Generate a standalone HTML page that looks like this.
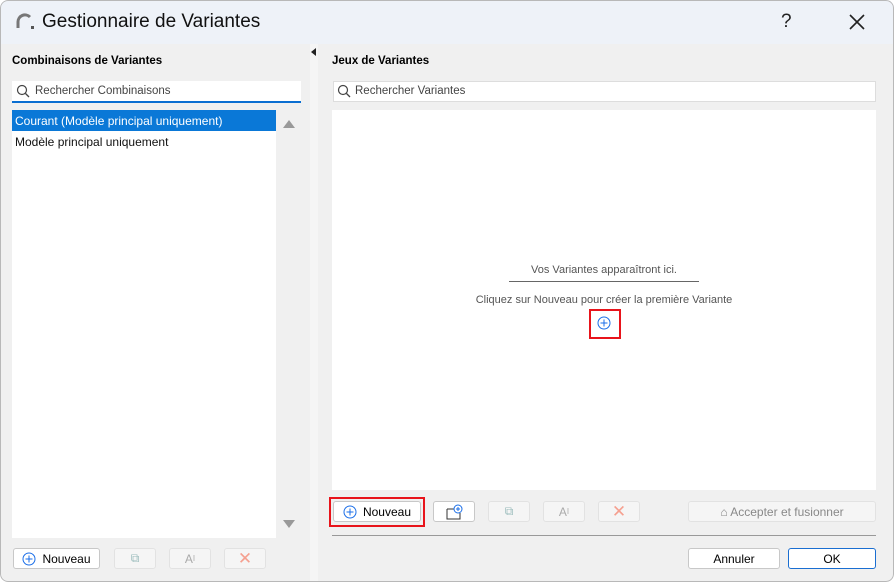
<!DOCTYPE html><html><head><style>
body{margin:0;width:894px;height:582px;background:#fff;font-family:"Liberation Sans",sans-serif;overflow:hidden}
.win{position:absolute;left:0;top:0;width:894px;height:582px;border-radius:8px;background:#f0f0f0;overflow:hidden}
.brd{position:absolute;left:0;top:0;width:892px;height:580px;border:1px solid #b8b8b8;border-radius:8px}
.title{position:absolute;left:0;top:0;width:894px;height:44px;background:#eef2f8}
.a{position:absolute}
.btn{position:absolute;height:20px;border:1px solid #c8c8c8;border-radius:3px;background:#fff;font-size:12px;display:flex;align-items:center;justify-content:center;box-sizing:border-box}
.dis{background:#f5f5f5;border-color:#e2e2e2;color:#aaa}
.t12{font-size:12px}
</style></head><body><div class="win">
<div class="title">
<svg class="a" style="left:15px;top:12px" width="20" height="18"><path d="M3 16 V10 A7 7 0 0 1 15 5" stroke="#777" stroke-width="3" fill="none"/><rect x="16" y="14" width="3" height="3" fill="#555"/></svg>
<div class="a" style="left:42px;top:11px;font-size:19px;color:#111">Gestionnaire de Variantes</div>
<div class="a" style="left:781px;top:11px;font-size:19px;color:#222">?</div>
<svg class="a" style="left:848px;top:13px" width="18" height="18"><path d="M2 2L16 16M16 2L2 16" stroke="#222" stroke-width="1.6"/></svg>
</div>
<div class="a" style="left:310px;top:44px;width:8px;height:540px;background:#f5f5f5"></div>
<div class="a" style="left:311px;top:48px;width:0;height:0;border-top:4px solid transparent;border-bottom:4px solid transparent;border-right:5px solid #222"></div>
<div class="a t12" style="left:12px;top:55px;font-weight:bold;font-size:11.5px">Combinaisons de Variantes</div>
<div class="a" style="left:12px;top:81px;width:289px;height:20px;background:#fff;border-bottom:2px solid #0a6ed1"></div>
<svg class="a" style="left:16px;top:84px" width="15" height="15"><circle cx="6" cy="6" r="4.5" stroke="#444" fill="none" stroke-width="1.2"/><path d="M9.5 9.5L13 13" stroke="#444" stroke-width="1.3"/></svg>
<div class="a t12" style="left:35px;top:85px;color:#444;font-size:11.5px">Rechercher Combinaisons</div>
<div class="a" style="left:12px;top:110px;width:264px;height:428px;background:#fff"></div>
<div class="a" style="left:12px;top:110px;width:264px;height:21px;background:#0a78d7"></div>
<div class="a t12" style="left:15px;top:114px;color:#fff">Courant (Modèle principal uniquement)</div>
<div class="a t12" style="left:15px;top:135px;color:#111">Modèle principal uniquement</div>
<div class="a" style="left:283px;top:120px;border-left:6px solid transparent;border-right:6px solid transparent;border-bottom:8px solid #999"></div>
<div class="a" style="left:283px;top:520px;border-left:6px solid transparent;border-right:6px solid transparent;border-top:8px solid #999"></div>
<div class="btn" style="left:13px;top:548px;width:87px;height:21px"><svg width="14" height="14" style="margin-right:6px"><circle cx="7" cy="7" r="6" stroke="#1a6ee8" fill="none"/><path d="M7 3.5V10.5M3.5 7H10.5" stroke="#1a6ee8"/></svg>Nouveau</div>
<div class="btn dis" style="left:114px;top:548px;width:42px;height:21px;color:#9bb">⧉</div>
<div class="btn dis" style="left:169px;top:548px;width:42px;height:21px">A<sup style="font-size:8px">I</sup></div>
<div class="btn dis" style="left:224px;top:548px;width:42px;height:21px;color:#f5a090;font-size:17px">✕</div>
<div class="a t12" style="left:332px;top:55px;font-weight:bold;font-size:11.5px">Jeux de Variantes</div>
<div class="a" style="left:333px;top:81px;width:543px;height:21px;background:#fff;border:1px solid #ddd;box-sizing:border-box"></div>
<svg class="a" style="left:337px;top:84px" width="15" height="15"><circle cx="6" cy="6" r="4.5" stroke="#444" fill="none" stroke-width="1.2"/><path d="M9.5 9.5L13 13" stroke="#444" stroke-width="1.3"/></svg>
<div class="a t12" style="left:355px;top:85px;color:#444;font-size:11.5px">Rechercher Variantes</div>
<div class="a" style="left:332px;top:110px;width:544px;height:380px;background:#fff"></div>
<div class="a" style="left:509px;top:264px;width:190px;text-align:center;font-size:11px;color:#555;border-bottom:1px solid #666;padding-bottom:5px">Vos Variantes apparaîtront ici.</div>
<div class="a" style="left:332px;top:294px;width:544px;text-align:center;font-size:11px;color:#555">Cliquez sur Nouveau pour créer la première Variante</div>
<div class="a" style="left:589px;top:309px;width:28px;height:26px;border:2px solid #e8141b"></div>
<svg class="a" style="left:597px;top:316px" width="14" height="14"><circle cx="7" cy="7" r="6" stroke="#1a6ee8" fill="none"/><path d="M7 3.5V10.5M3.5 7H10.5" stroke="#1a6ee8"/></svg>
<div class="a" style="left:329px;top:497px;width:92px;height:26px;border:2px solid #e8141b"></div>
<div class="btn" style="left:333px;top:501px;width:88px;height:21px"><svg width="14" height="14" style="margin-right:6px"><circle cx="7" cy="7" r="6" stroke="#1a6ee8" fill="none"/><path d="M7 3.5V10.5M3.5 7H10.5" stroke="#1a6ee8"/></svg>Nouveau</div>
<div class="btn" style="left:433px;top:501px;width:42px;height:21px"><svg width="20" height="16"><path d="M3 5H10M3 5V15H16V9" stroke="#333" fill="none"/><circle cx="14" cy="5" r="4" stroke="#1a6ee8" fill="none"/><path d="M14 3V7M12 5H16" stroke="#1a6ee8"/></svg></div>
<div class="btn dis" style="left:488px;top:501px;width:42px;height:21px;color:#9bb">⧉</div>
<div class="btn dis" style="left:543px;top:501px;width:42px;height:21px">A<sup style="font-size:8px">I</sup></div>
<div class="btn dis" style="left:598px;top:501px;width:42px;height:21px;color:#f5a090;font-size:17px">✕</div>
<div class="btn dis" style="left:688px;top:501px;width:188px;height:21px;color:#888">⌂ Accepter et fusionner</div>
<div class="a" style="left:332px;top:535px;width:544px;height:1px;background:#999"></div>
<div class="btn" style="left:688px;top:548px;width:92px;height:21px">Annuler</div>
<div class="btn" style="left:788px;top:548px;width:88px;height:21px;border-color:#1a6ed1">OK</div>
<div class="brd"></div>
</div></body></html>
